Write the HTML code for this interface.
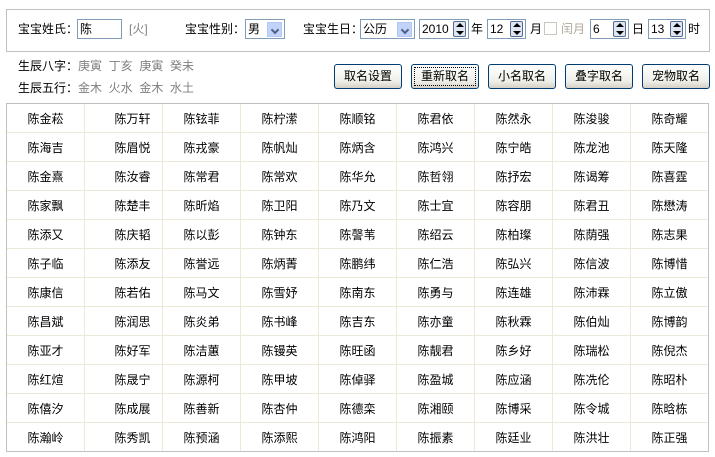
<!DOCTYPE html>
<html><head><meta charset="utf-8"><style>
*{margin:0;padding:0;box-sizing:border-box}
body{width:715px;height:457px;background:#fff;font:12px "Liberation Sans","WenQuanYi Zen Hei","Noto Sans CJK SC",sans-serif;color:#000;position:relative;overflow:hidden}
.a{position:absolute;white-space:nowrap;line-height:14px}
.box{position:absolute;left:6px;top:9px;width:704px;height:43px;border:1px solid #c0c0c0}
.in{position:absolute;border:1px solid #7f9db9;background:#fff;height:20px;line-height:18px;padding-left:2px}
.dd{position:absolute;top:2px;right:2px;width:15px;height:15px;background:#c1d3fb;border:1px solid #b4c7f0}
.dd:after{content:"";position:absolute;left:4px;top:4px;width:4px;height:4px;border-right:2px solid #4d6185;border-bottom:2px solid #4d6185;transform:rotate(45deg)}
.sp{position:absolute;top:1px;right:2px;width:13px;height:16px;border:1px solid #5a6a8a;background:#dfe6f3;border-radius:2px}
.sp:before{content:"";position:absolute;left:2px;top:1px;border:4px solid transparent;border-bottom:4px solid #000;border-top:0}
.sp:after{content:"";position:absolute;left:2px;bottom:1px;border:4px solid transparent;border-top:4px solid #000;border-bottom:0}
.g{color:#808080}
.btn{position:absolute;top:64px;width:68px;height:25px;border:1px solid #003c74;border-radius:3px;background:linear-gradient(#fff,#f0f0ea 70%,#d6d0c5);text-align:center;line-height:23px;font-size:12px}
table{position:absolute;left:6px;top:103px;border-collapse:collapse;outline:1px solid #c0c0c0;outline-offset:-1px}
td{width:78px;height:29px;border:1px solid #ece9d8;text-align:center;font-size:12px;padding:0}
td:nth-child(2){padding-left:18px}
</style></head><body>
<div class="box"></div>
<div class="a" style="left:18px;top:22px">宝宝姓氏：</div>
<div class="in" style="left:77px;top:19px;width:45px">陈</div>
<div class="a g" style="left:129px;top:22px">[火]</div>
<div class="a" style="left:185px;top:22px">宝宝性别：</div>
<div class="in" style="left:245px;top:19px;width:40px">男<div class="dd"></div></div>
<div class="a" style="left:303px;top:22px">宝宝生日：</div>
<div class="in" style="left:360px;top:19px;width:55px">公历<div class="dd"></div></div>
<div class="in" style="left:419px;top:19px;width:50px">2010<div class="sp"></div></div>
<div class="a" style="left:471px;top:22px">年</div>
<div class="in" style="left:487px;top:19px;width:39px">12<div class="sp"></div></div>
<div class="a" style="left:530px;top:22px">月</div>
<div style="position:absolute;left:544px;top:22px;width:13px;height:13px;border:1px solid #c8c8c0"></div>
<div class="a g" style="left:561px;top:22px;color:#aca899">闰月</div>
<div class="in" style="left:590px;top:19px;width:39px">6<div class="sp"></div></div>
<div class="a" style="left:632px;top:22px">日</div>
<div class="in" style="left:648px;top:19px;width:38px">13<div class="sp"></div></div>
<div class="a" style="left:688px;top:22px">时</div>
<div class="a" style="left:18px;top:59px">生辰八字：<span class="g">庚寅&nbsp; 丁亥&nbsp; 庚寅&nbsp; 癸未</span></div>
<div class="a" style="left:18px;top:81px">生辰五行：<span class="g">金木&nbsp; 火水&nbsp; 金木&nbsp; 水土</span></div>
<div class="btn" style="left:334px">取名设置</div>
<div class="btn" style="left:411px;outline:1px dotted #000;outline-offset:-4px">重新取名</div>
<div class="btn" style="left:488px">小名取名</div>
<div class="btn" style="left:565px">叠字取名</div>
<div class="btn" style="left:642px">宠物取名</div>
<table>
<tr><td>陈金菘</td><td>陈万轩</td><td>陈铉菲</td><td>陈柠潆</td><td>陈顺铭</td><td>陈君依</td><td>陈然永</td><td>陈浚骏</td><td>陈奇耀</td></tr>
<tr><td>陈海吉</td><td>陈眉悦</td><td>陈戎豪</td><td>陈帆灿</td><td>陈炳含</td><td>陈鸿兴</td><td>陈宁皓</td><td>陈龙池</td><td>陈天隆</td></tr>
<tr><td>陈金熹</td><td>陈汝睿</td><td>陈常君</td><td>陈常欢</td><td>陈华允</td><td>陈哲翎</td><td>陈抒宏</td><td>陈谒筹</td><td>陈喜霆</td></tr>
<tr><td>陈家飘</td><td>陈楚丰</td><td>陈昕焰</td><td>陈卫阳</td><td>陈乃文</td><td>陈士宜</td><td>陈容朋</td><td>陈君丑</td><td>陈懋涛</td></tr>
<tr><td>陈添又</td><td>陈庆韬</td><td>陈以彭</td><td>陈钟东</td><td>陈謦苇</td><td>陈绍云</td><td>陈柏璨</td><td>陈荫强</td><td>陈志果</td></tr>
<tr><td>陈子临</td><td>陈添友</td><td>陈誉远</td><td>陈炳菁</td><td>陈鹏纬</td><td>陈仁浩</td><td>陈弘兴</td><td>陈信波</td><td>陈博惜</td></tr>
<tr><td>陈康信</td><td>陈若佑</td><td>陈马文</td><td>陈雪妤</td><td>陈南东</td><td>陈勇与</td><td>陈连雄</td><td>陈沛霖</td><td>陈立傲</td></tr>
<tr><td>陈昌斌</td><td>陈润思</td><td>陈炎弟</td><td>陈书峰</td><td>陈吉东</td><td>陈亦童</td><td>陈秋霖</td><td>陈伯灿</td><td>陈博韵</td></tr>
<tr><td>陈亚才</td><td>陈好军</td><td>陈洁蕙</td><td>陈镘英</td><td>陈旺函</td><td>陈靓君</td><td>陈乡好</td><td>陈瑞松</td><td>陈倪杰</td></tr>
<tr><td>陈红煊</td><td>陈晟宁</td><td>陈源柯</td><td>陈甲坡</td><td>陈倬驿</td><td>陈盈城</td><td>陈应涵</td><td>陈冼伦</td><td>陈昭朴</td></tr>
<tr><td>陈僖汐</td><td>陈成展</td><td>陈善新</td><td>陈杏仲</td><td>陈德栾</td><td>陈湘颐</td><td>陈博采</td><td>陈令城</td><td>陈晗栋</td></tr>
<tr><td>陈瀚岭</td><td>陈秀凯</td><td>陈预涵</td><td>陈添熙</td><td>陈鸿阳</td><td>陈振素</td><td>陈廷业</td><td>陈洪壮</td><td>陈正强</td></tr>
</table>
</body></html>
